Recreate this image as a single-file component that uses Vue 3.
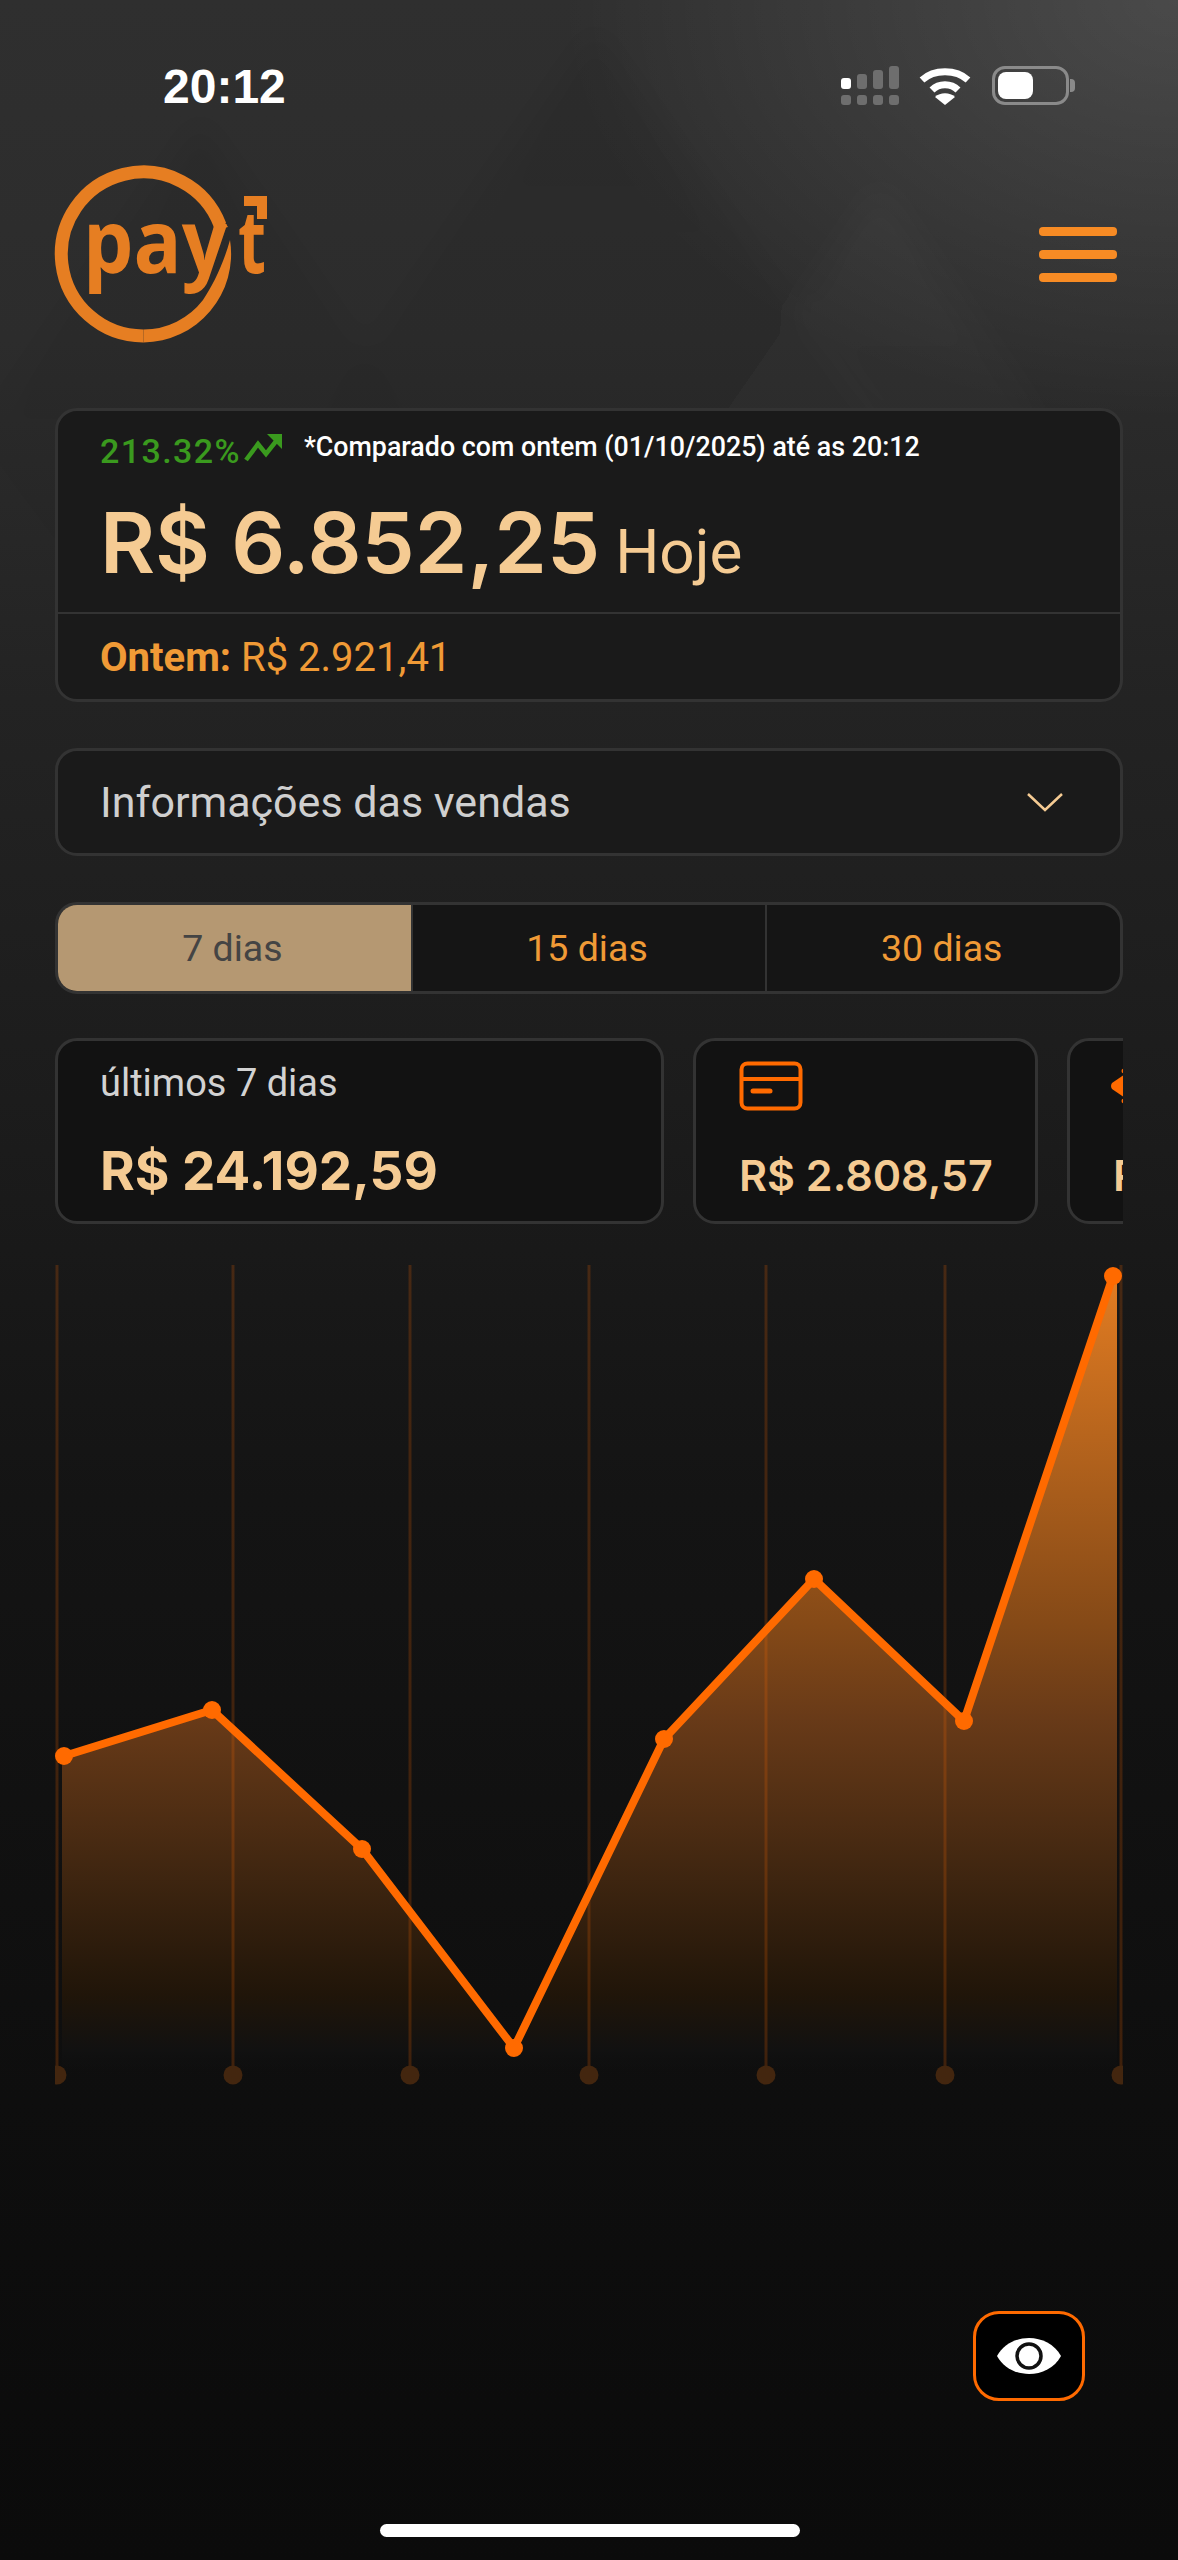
<script setup>
const tabs = ["7 dias", "15 dias", "30 dias"];

const gridX = [2, 178, 355, 534, 711, 890, 1066];
const points = [
  [9, 491],
  [157, 445],
  [307, 584],
  [459, 783],
  [609, 474],
  [759, 314],
  [909, 456],
  [1058, 11],
];
const chartBase = 810;
const linePath = points.map((p) => p.join(",")).join(" ");
const areaPath = `7,${chartBase} 7,491 ${linePath} 1062,11 1062,${chartBase}`;
</script>

<template>
  <div class="page">
    <svg class="bg-art" width="1178" height="1000" viewBox="0 0 1178 1000">
      <defs>
        <linearGradient id="fadeDark" x1="0" y1="0" x2="0" y2="1">
          <stop offset="0" stop-color="#000" stop-opacity="0.07" />
          <stop offset="1" stop-color="#000" stop-opacity="0" />
        </linearGradient>
        <linearGradient id="fadeLight" x1="0" y1="0" x2="0" y2="1">
          <stop offset="0" stop-color="#fff" stop-opacity="0.025" />
          <stop offset="1" stop-color="#fff" stop-opacity="0" />
        </linearGradient>
        <filter id="soft"><feGaussianBlur stdDeviation="14" /></filter>
      </defs>
      <g filter="url(#soft)">
        <polygon points="595,30 880,430 595,860 310,430" fill="url(#fadeDark)" />
        <polygon points="880,190 1040,420 880,720 720,420" fill="url(#fadeLight)" />
        <polygon points="200,120 420,430 200,760 -20,430" fill="url(#fadeDark)" />
      </g>
    </svg>

    <div class="status">
      <span class="time">20:12</span>
      <div class="status-icons">
        <svg width="58" height="40" viewBox="0 0 58 40">
          <rect x="0" y="12" width="10" height="11" rx="3" fill="#fff" />
          <rect x="16" y="8" width="10" height="15" rx="3" fill="#6e6e6e" />
          <rect x="32" y="4" width="10" height="19" rx="3" fill="#6e6e6e" />
          <rect x="48" y="0" width="10" height="23" rx="3" fill="#6e6e6e" />
          <rect x="0" y="29" width="10" height="10" rx="3" fill="#6e6e6e" />
          <rect x="16" y="29" width="10" height="10" rx="3" fill="#6e6e6e" />
          <rect x="32" y="29" width="10" height="10" rx="3" fill="#6e6e6e" />
          <rect x="48" y="29" width="10" height="10" rx="3" fill="#6e6e6e" />
        </svg>
        <svg class="wifi" width="52" height="40" viewBox="0 0 52 40">
          <path d="M3 14 C15 3 37 3 49 14" fill="none" stroke="#fff" stroke-width="7" />
          <path d="M13 24 C20 17 32 17 39 24" fill="none" stroke="#fff" stroke-width="7" />
          <path d="M26 39 L16 31 C21 26 31 26 36 31 Z" fill="#fff" />
        </svg>
        <div class="battery">
          <div class="battery-level"></div>
        </div>
      </div>
    </div>

    <header class="topbar">
      <svg class="logo" width="240" height="178" viewBox="0 0 240 178">
        <path d="M90.5 171 A82 82 0 1 1 167 60" fill="none" stroke="#e67e22" stroke-width="13" />
        <path d="M177 75 A88.5 88.5 0 0 1 90.5 177.5 L90.5 164.5 A75.5 75.5 0 0 0 150 135 C160 120 170 100 177 75 Z" fill="#e67e22" />
        <path d="M166 49 L175 62 L160 66 Z" fill="#e67e22" />
        <text class="logo-text" x="30" y="108" textLength="144" lengthAdjust="spacingAndGlyphs">pay</text>
        <text class="logo-text" x="185" y="108" textLength="28" lengthAdjust="spacingAndGlyphs">t</text>
        <path d="M191 31 H214 V54 H204 V41 H191 Z" fill="#e67e22" />
      </svg>
      <div class="burger">
        <span></span>
        <span></span>
        <span></span>
      </div>
    </header>

    <section class="hero card">
      <div class="hero-main">
        <div class="compare">
          <span class="percent">213.32%</span>
          <svg class="trend" width="38" height="28" viewBox="0 0 38 28">
            <path d="M2 26 L14 10 L22 20 L33 6" fill="none" stroke="#3a9a1e" stroke-width="4.5" />
            <path d="M23 0 H38 V15 Z" fill="#3a9a1e" />
          </svg>
          <span class="compare-note">*Comparado com ontem (01/10/2025) até as 20:12</span>
        </div>
        <div class="today">
          <span class="today-value">R$ 6.852,25</span>
          <span class="today-label">Hoje</span>
        </div>
      </div>
      <div class="hero-foot">
        <b>Ontem:</b> R$ 2.921,41
      </div>
    </section>

    <div class="select card">
      <span>Informações das vendas</span>
      <svg width="38" height="22" viewBox="0 0 38 22">
        <path d="M2 3 L19 19 L36 3" fill="none" stroke="#f5cb93" stroke-width="2.5" />
      </svg>
    </div>

    <div class="tabs">
      <button
        v-for="(tab, index) in tabs"
        :key="tab"
        class="tab"
        :class="{ active: index === 0 }"
      >
        {{ tab }}
      </button>
    </div>

    <div class="stats">
      <div class="stat card stat-wide">
        <div class="stat-label">últimos 7 dias</div>
        <div class="stat-total">R$ 24.192,59</div>
      </div>
      <div class="stat card stat-method">
        <svg class="stat-icon" width="64" height="50" viewBox="0 0 64 50">
          <rect x="2.5" y="2.5" width="59" height="45" rx="6" fill="none" stroke="#ff6a00" stroke-width="4" />
          <path d="M2 18 H62" stroke="#ff6a00" stroke-width="4" />
          <path d="M14 30 H31" stroke="#ff6a00" stroke-width="5" stroke-linecap="round" />
        </svg>
        <div class="stat-value">R$ 2.808,57</div>
      </div>
      <div class="stat card stat-method stat-clipped">
        <svg class="stat-icon" width="50" height="50" viewBox="0 0 50 50">
          <path d="M1 22 Q-1 25 1 28 L14 37 H30 V13 H14 Z" fill="#ff6a00" />
          <circle cx="13" cy="10" r="2.5" fill="#ff6a00" />
          <circle cx="13" cy="40" r="2.5" fill="#ff6a00" />
        </svg>
        <div class="stat-value">R$ 1.204,09</div>
      </div>
    </div>

    <svg class="chart" width="1068" height="825" viewBox="0 0 1068 825">
      <defs>
        <linearGradient id="areaFill" x1="0" y1="0" x2="0" y2="1">
          <stop offset="0" stop-color="#e27c22" />
          <stop offset="0.43" stop-color="#864a17" />
          <stop offset="0.555" stop-color="#683a18" />
          <stop offset="0.755" stop-color="#3e2510" />
          <stop offset="0.9" stop-color="#201509" />
          <stop offset="0.97" stop-color="#111111" />
          <stop offset="1" stop-color="#0f0f0f" stop-opacity="0" />
        </linearGradient>
      </defs>
      <polygon :points="areaPath" fill="url(#areaFill)" />
      <g v-for="x in gridX" :key="x">
        <line :x1="x" y1="0" :x2="x" y2="810" stroke="#ff6a00" stroke-opacity="0.2" stroke-width="3" />
        <circle :cx="x" cy="810" r="9.5" fill="#43260f" />
      </g>
      <polyline :points="linePath" fill="none" stroke="#ff6a00" stroke-width="8" />
      <circle
        v-for="p in points"
        :key="p[0]"
        :cx="p[0]"
        :cy="p[1]"
        r="9"
        fill="#ff6a00"
      />
    </svg>

    <button class="eye">
      <svg width="66" height="46" viewBox="0 0 66 46">
        <path d="M1 23 C14 -1 52 -1 65 23 C52 47 14 47 1 23 Z" fill="#fff" />
        <circle cx="33" cy="23" r="12" fill="#fff" stroke="#111" stroke-width="3.5" />
      </svg>
    </button>

    <div class="home-bar"></div>
  </div>
</template>

<style scoped>
.page {
  position: relative;
  isolation: isolate;
  box-sizing: border-box;
  width: 1178px;
  height: 2560px;
  padding: 0 55px;
  overflow: hidden;
  font-family: Roboto, "Liberation Sans", sans-serif;
  background:
    radial-gradient(620px 420px at 100% 0, rgba(255, 255, 255, 0.13), rgba(255, 255, 255, 0)),
    linear-gradient(180deg, #2f2f2f 0, #2c2c2c 340px, #232323 700px, #1c1c1c 1100px, #141414 1500px, #0e0e0e 2100px, #0b0b0b 2560px);
}

.bg-art {
  position: absolute;
  left: 0;
  top: 0;
  z-index: -1;
}

.status {
  display: flex;
  justify-content: space-between;
  align-items: center;
  height: 42px;
  padding: 65px 54px 0 108px;
}

.time {
  font-family: "Liberation Sans", sans-serif;
  font-size: 48px;
  font-weight: 700;
  color: #fff;
}

.status-icons {
  display: flex;
  align-items: flex-start;
  gap: 20px;
}

.wifi {
  margin-right: 1px;
}

.battery {
  position: relative;
  box-sizing: border-box;
  width: 77px;
  height: 39px;
  padding: 3px;
  border: 3px solid #8a8a8a;
  border-radius: 13px;
}

.battery::after {
  content: "";
  position: absolute;
  right: -9px;
  top: 10px;
  width: 5px;
  height: 13px;
  border-radius: 0 4px 4px 0;
  background: #8a8a8a;
}

.battery-level {
  width: 35px;
  height: 27px;
  border-radius: 8px;
  background: #fff;
}

.topbar {
  display: flex;
  justify-content: space-between;
  align-items: center;
  margin-top: 58px;
  height: 178px;
}

.logo {
  margin-left: -2px;
}

.logo-text {
  font-family: "Open Sans", sans-serif;
  font-size: 88px;
  font-weight: 700;
  fill: #e67e22;
}

.burger {
  display: flex;
  flex-direction: column;
  gap: 14px;
  width: 78px;
  margin-right: 6px;
}

.burger span {
  height: 9px;
  border-radius: 4px;
  background: #f78b24;
}

.card {
  box-sizing: border-box;
  border: 3px solid #333;
  border-radius: 22px;
}

.hero {
  height: 294px;
  margin-top: 65px;
  background: #1a1a1a;
}

.hero-main {
  box-sizing: border-box;
  height: 203px;
  padding: 20px 42px 0;
  border-bottom: 2px solid #333;
}

.compare {
  display: flex;
  align-items: center;
  height: 40px;
}

.percent {
  font-size: 34px;
  font-weight: 500;
  letter-spacing: 1.4px;
  color: #3a9a1e;
}

.trend {
  margin: 0 22px 6px 3px;
}

.compare-note {
  margin-bottom: 8px;
  font-size: 26.8px;
  font-weight: 500;
  color: #fff;
}

.today {
  display: flex;
  align-items: baseline;
  gap: 15px;
  margin-top: 20px;
}

.today-value {
  font-family: Inter, sans-serif;
  font-size: 84.5px;
  font-weight: 600;
  color: #f5cb93;
}

.today-label {
  font-size: 62px;
  font-weight: 400;
  color: #f5cb93;
}

.hero-foot {
  padding: 0 42px;
  line-height: 88px;
  font-size: 40px;
  font-weight: 400;
  color: #f09a36;
}

.hero-foot b {
  font-weight: 700;
}

.select {
  display: flex;
  justify-content: space-between;
  align-items: center;
  height: 108px;
  margin-top: 46px;
  padding: 0 56px 0 42px;
  font-size: 43px;
  font-weight: 400;
  color: #cfcfcf;
  background: #1a1a1a;
}

.tabs {
  display: flex;
  box-sizing: border-box;
  height: 92px;
  margin-top: 46px;
  border: 3px solid #333;
  border-radius: 22px;
  overflow: hidden;
  background: #151515;
}

.tab {
  flex: 1;
  padding: 0 4px 0 0;
  border: 0;
  border-left: 2px solid #333;
  font-family: inherit;
  font-size: 37.5px;
  font-weight: 400;
  color: #f09a36;
  background: transparent;
}

.tab.active {
  border-left: 0;
  color: #444;
  background: #b59872;
}

.stats {
  display: flex;
  gap: 29px;
  height: 186px;
  margin-top: 44px;
  overflow: hidden;
}

.stat {
  flex: none;
  height: 186px;
  background: #121212;
}

.stat-wide {
  width: 609px;
  padding: 20px 42px 0;
}

.stat-method {
  width: 345px;
  padding: 20px 0 0 43px;
}

.stat-clipped .stat-icon {
  margin-left: -2px;
}

.stat-label {
  font-size: 38px;
  font-weight: 400;
  color: #d2d2d2;
}

.stat-total {
  margin-top: 34px;
  font-family: Inter, sans-serif;
  font-size: 53px;
  font-weight: 700;
  white-space: nowrap;
  color: #f5cb93;
}

.stat-icon {
  display: block;
}

.stat-value {
  margin-top: 38px;
  font-family: Inter, sans-serif;
  font-size: 43px;
  font-weight: 600;
  white-space: nowrap;
  color: #f5cb93;
}

.chart {
  display: block;
  margin-top: 41px;
}

.eye {
  position: absolute;
  left: 973px;
  top: 2311px;
  display: flex;
  justify-content: center;
  align-items: center;
  box-sizing: border-box;
  width: 112px;
  height: 90px;
  padding: 0;
  border: 3px solid #ff6a00;
  border-radius: 26px;
  background: #000;
}

.home-bar {
  position: absolute;
  left: 380px;
  top: 2524px;
  width: 420px;
  height: 13px;
  border-radius: 7px;
  background: #fff;
}
</style>

<style>
body {
  background: #0b0b0b;
}
</style>
